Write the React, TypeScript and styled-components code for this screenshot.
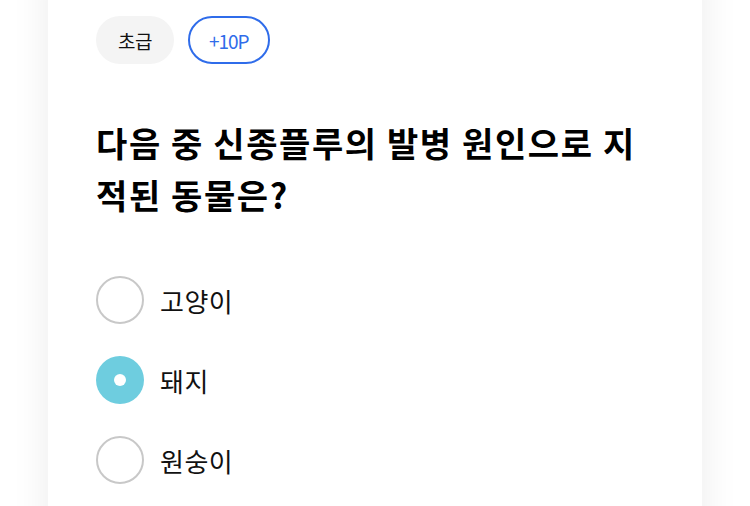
import React from "react";
import styled, { createGlobalStyle } from "styled-components";

const Global = createGlobalStyle`
  html, body { margin: 0; padding: 0; background: #ffffff; }
  body { font-family: "Noto Sans CJK KR", "Noto Sans", sans-serif; color: #111; }
`;

const Page = styled.div`
  width: 750px;
  height: 506px;
  overflow: hidden;
  display: flex;
  justify-content: center;
`;

const Card = styled.div`
  width: 654px;
  box-sizing: border-box;
  margin-top: -40px;
  height: 600px;
  padding: 56px 48px 0;
  background: #fff;
  box-shadow: 0 0 36px rgba(0, 0, 0, 0.08);
`;

const Chips = styled.div`
  display: flex;
  gap: 14px;
`;

const Chip = styled.span<{ $outline?: boolean }>`
  height: 48px;
  box-sizing: border-box;
  padding: 0 ${(p) => (p.$outline ? "19px" : "22px")};
  border-radius: 24px;
  display: inline-flex;
  align-items: center;
  font-size: 19px;
  letter-spacing: ${(p) => (p.$outline ? "-1px" : "-0.5px")};
  background: ${(p) => (p.$outline ? "#fff" : "#f4f4f4")};
  border: ${(p) => (p.$outline ? "2px solid #2f6cea" : "none")};
  color: ${(p) => (p.$outline ? "#2f6cea" : "#111")};
`;

const Title = styled.h2`
  margin: 53px 0 0;
  font-size: 34px;
  line-height: 52px;
  font-weight: 700;
  color: #000;
  letter-spacing: 1.6px;
  word-break: break-all;
`;

const Options = styled.div`
  margin-top: 55px;
  display: flex;
  flex-direction: column;
  gap: 32px;
`;

const Option = styled.label`
  display: flex;
  align-items: center;
  gap: 16px;
  font-size: 26px;
  letter-spacing: 0.5px;
  color: #111;
`;

const Radio = styled.span<{ $checked?: boolean }>`
  width: 48px;
  height: 48px;
  box-sizing: border-box;
  border-radius: 50%;
  border: ${(p) => (p.$checked ? "none" : "2px solid #c8c8c8")};
  background: ${(p) => (p.$checked ? "#6ecddf" : "#fff")};
  display: flex;
  align-items: center;
  justify-content: center;
  flex-shrink: 0;
  &::after {
    content: "";
    display: ${(p) => (p.$checked ? "block" : "none")};
    width: 12px;
    height: 12px;
    border-radius: 50%;
    background: #fff;
  }
`;

const options = [
  { label: "고양이", checked: false },
  { label: "돼지", checked: true },
  { label: "원숭이", checked: false },
];

export default function App() {
  return (
    <>
      <Global />
      <Page>
        <Card>
          <Chips>
            <Chip>초급</Chip>
            <Chip $outline>+10P</Chip>
          </Chips>
          <Title>다음 중 신종플루의 발병 원인으로 지적된 동물은?</Title>
          <Options>
            {options.map((o) => (
              <Option key={o.label}>
                <Radio $checked={o.checked} />
                {o.label}
              </Option>
            ))}
          </Options>
        </Card>
      </Page>
    </>
  );
}
